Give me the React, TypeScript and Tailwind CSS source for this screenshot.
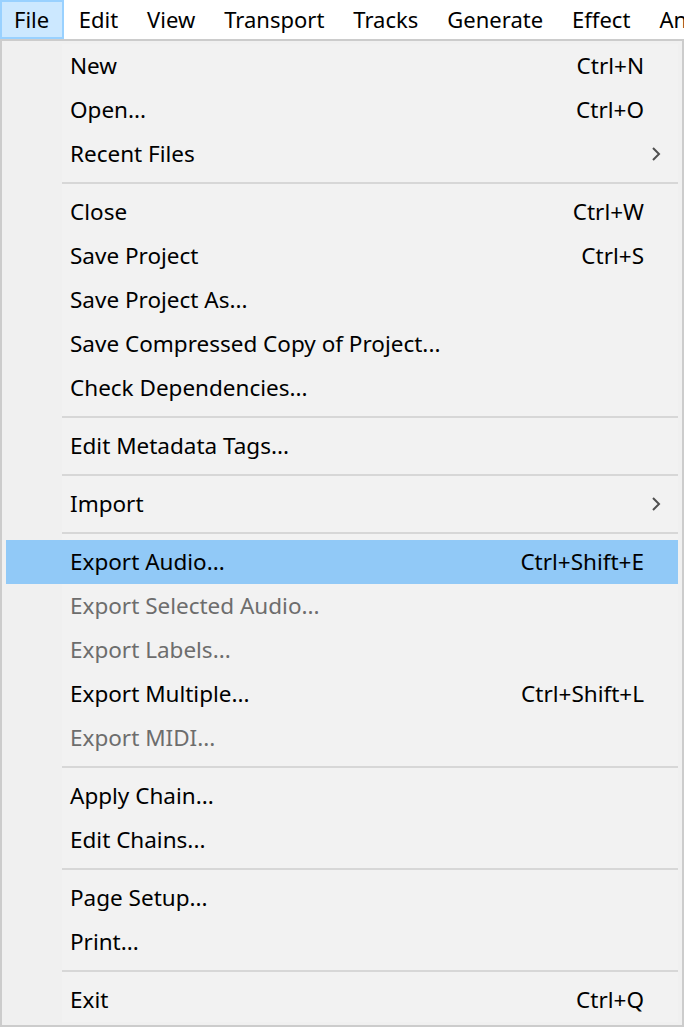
import React from "react";

type Item =
  | { type: "sep" }
  | { type: "item"; label: string; shortcut?: string; sub?: boolean; disabled?: boolean; active?: boolean };

const items: Item[] = [
  { type: "item", label: "New", shortcut: "Ctrl+N" },
  { type: "item", label: "Open...", shortcut: "Ctrl+O" },
  { type: "item", label: "Recent Files", sub: true },
  { type: "sep" },
  { type: "item", label: "Close", shortcut: "Ctrl+W" },
  { type: "item", label: "Save Project", shortcut: "Ctrl+S" },
  { type: "item", label: "Save Project As..." },
  { type: "item", label: "Save Compressed Copy of Project..." },
  { type: "item", label: "Check Dependencies..." },
  { type: "sep" },
  { type: "item", label: "Edit Metadata Tags..." },
  { type: "sep" },
  { type: "item", label: "Import", sub: true },
  { type: "sep" },
  { type: "item", label: "Export Audio...", shortcut: "Ctrl+Shift+E", active: true },
  { type: "item", label: "Export Selected Audio...", disabled: true },
  { type: "item", label: "Export Labels...", disabled: true },
  { type: "item", label: "Export Multiple...", shortcut: "Ctrl+Shift+L" },
  { type: "item", label: "Export MIDI...", disabled: true },
  { type: "sep" },
  { type: "item", label: "Apply Chain..." },
  { type: "item", label: "Edit Chains..." },
  { type: "sep" },
  { type: "item", label: "Page Setup..." },
  { type: "item", label: "Print..." },
  { type: "sep" },
  { type: "item", label: "Exit", shortcut: "Ctrl+Q" },
];

const menus = ["File", "Edit", "View", "Transport", "Tracks", "Generate", "Effect", "Analyze"];

function Chevron() {
  return (
    <svg width="10" height="16" viewBox="0 0 10 16" className="block">
      <path d="M2 2 L8 8 L2 14" fill="none" stroke="#505050" strokeWidth="2" />
    </svg>
  );
}

export default function App() {
  return (
    <div
      className="w-[684px] h-[1028px] overflow-hidden bg-white text-black"
      style={{ fontFamily: '"Noto Sans", "Open Sans", sans-serif' }}
    >
      <div className="h-[39px] flex items-stretch bg-white whitespace-nowrap">
        {menus.map((m, i) => (
          <div
            key={m}
            className={
              i === 0
                ? "flex items-center pl-[12px] pr-[13px] pb-[1px] text-[22px] bg-[#cce8ff] border-2 border-[#99d1ff]"
                : "flex items-center px-[14.5px] pb-[1px] text-[22px]"
            }
          >
            {m}
          </div>
        ))}
      </div>
      <div className="w-[684px] border-2 border-[#cccccc] bg-[#f0f0f0] pt-[3px] pb-[3px] pl-[4px] pr-[4px]">
        <div className="bg-[linear-gradient(to_right,#f0f0f0_56px,#f2f2f2_56px)]">
          {items.map((it, idx) =>
            it.type === "sep" ? (
              <div key={idx} className="h-[14px] flex items-center pl-[56px]">
                <div className="h-[2px] w-full bg-[#d7d7d7]" />
              </div>
            ) : (
              <div
                key={idx}
                className={
                  "h-[44px] flex items-center pl-[64px] pr-[34px] text-[22.5px] whitespace-nowrap " +
                  (it.active ? "bg-[#91c9f7] " : "") +
                  (it.disabled ? "text-[#6d6d6d]" : "text-black")
                }
              >
                <span className="flex-1">{it.label}</span>
                {it.shortcut && <span>{it.shortcut}</span>}
                {it.sub && (
                  <span className="mr-[-17px]">
                    <Chevron />
                  </span>
                )}
              </div>
            )
          )}
        </div>
      </div>
    </div>
  );
}
